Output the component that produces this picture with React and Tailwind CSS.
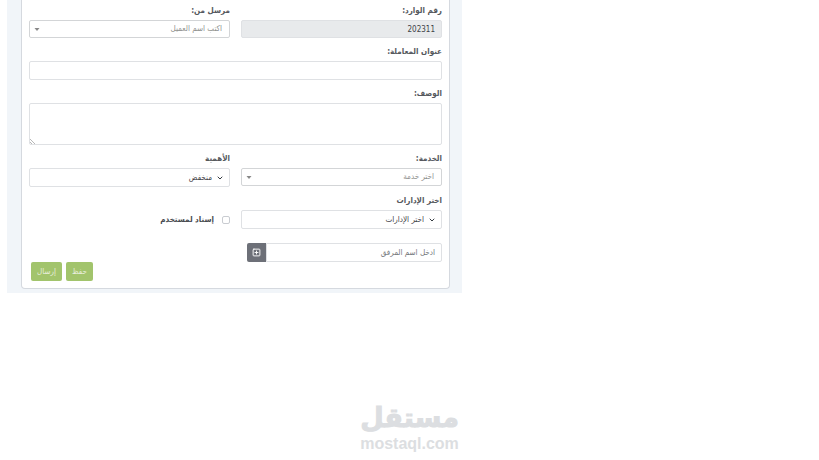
import { ChevronDown, SquarePlus } from "lucide-react";
import clsx from "clsx";

const field =
  "block w-full rounded-[2px] border border-[#dfe1e4] bg-white px-[6px] text-[8px] leading-[12px] text-[#3f4247] placeholder:text-[#75787c] placeholder:opacity-100 outline-none focus:border-[#a2c46c]";

function Label({ htmlFor, children }) {
  return (
    <label htmlFor={htmlFor} className="flex h-[17px] items-center pb-[2px] text-[8px] font-bold text-[#55585d]">
      {children}
    </label>
  );
}

function SearchSelect({ id, placeholder }) {
  return (
    <div className="relative">
      <select
        id={id}
        className={clsx(field, "h-[18px] appearance-none border-[#d3d5d7]! pr-[7px] pl-4 text-[#8f918e]!")}
      >
        <option>{placeholder}</option>
      </select>
      <svg viewBox="0 0 6 3" className="pointer-events-none absolute top-2 left-[5px] h-[3px] w-[6px] fill-[#888]" aria-hidden="true">
        <path d="M0.5 0h5L3 3z" />
      </svg>
    </div>
  );
}

function FormSelect({ id, value }) {
  return (
    <div className="relative">
      <select id={id} className={clsx(field, "h-[19px] appearance-none pr-[17px]")}>
        <option>{value}</option>
      </select>
      <ChevronDown
        className="pointer-events-none absolute top-[6px] right-[6px] size-2 text-[#343a40]"
        strokeWidth={3}
        aria-hidden="true"
      />
    </div>
  );
}

function ActionButton({ children }) {
  return (
    <button type="button" className="h-[19px] rounded-[2px] bg-[#a2c46c] px-[6px] text-[8px] text-[#e8eedc]">
      {children}
    </button>
  );
}

export default function App() {
  return (
    <div className="flex min-h-screen flex-col justify-between bg-white font-['DejaVu_Sans_Condensed','DejaVu_Sans',sans-serif]">
      <main dir="rtl" lang="ar" className="mr-auto ml-[7px] w-5/9 self-start bg-[#f1f5f9] pr-3 pb-1 pl-[14px]">
        <form className="rounded-b-[4px] border border-t-0 border-[#d5d9df] bg-white px-[7px] pt-[3px] pb-[7px]">
          <div className="grid grid-cols-2 gap-x-[11px] gap-y-[6px]">
            <div>
              <Label htmlFor="number">رقم الوارد:</Label>
              <input id="number" readOnly defaultValue="202311" className={clsx(field, "h-[18px] bg-[#e8eaec]!")} />
            </div>
            <div>
              <Label htmlFor="sender">مرسل من:</Label>
              <SearchSelect id="sender" placeholder="اكتب اسم العميل" />
            </div>
            <div className="col-span-2">
              <Label htmlFor="title">عنوان المعاملة:</Label>
              <input id="title" className={clsx(field, "h-[19px]")} />
            </div>
            <div className="col-span-2">
              <Label htmlFor="description">الوصف:</Label>
              <div className="relative">
                <textarea id="description" className={clsx(field, "h-[42px] resize-none")} />
                <svg viewBox="0 0 5 5" className="pointer-events-none absolute bottom-px left-px size-[5px] stroke-[#999]" strokeWidth="0.7" aria-hidden="true">
                  <path d="M0 0l5 5M0 3l2 2" />
                </svg>
              </div>
            </div>
            <div>
              <Label htmlFor="service">الخدمة:</Label>
              <SearchSelect id="service" placeholder="اختر خدمة" />
            </div>
            <div>
              <Label htmlFor="priority">الأهمية</Label>
              <FormSelect id="priority" value="منخفض" />
            </div>
            <div>
              <Label htmlFor="departments">اختر الإدارات</Label>
              <FormSelect id="departments" value="اختر الإدارات" />
            </div>
            <div className="flex h-[19px] items-center gap-2 self-end">
              <input
                id="assign"
                type="checkbox"
                className="size-2 appearance-none rounded-[2px] border border-[#c9ccd1] bg-white checked:bg-[#a2c46c]"
              />
              <label htmlFor="assign" className="text-[8px] font-bold text-[#484b50]">
                إسناد لمستخدم
              </label>
            </div>
          </div>

          <div className="mt-[14px] grid grid-cols-2 gap-x-[11px]">
            <div className="flex pl-[6px]">
              <input
                aria-label="ادخل اسم المرفق"
                placeholder="ادخل اسم المرفق"
                className={clsx(field, "h-[19px] min-w-0 flex-1 rounded-l-none")}
              />
              <button
                type="button"
                aria-label="إضافة مرفق"
                className="flex h-[19px] w-[19px] items-center justify-center rounded-l-[2px] bg-[#6d7078] text-white"
              >
                <SquarePlus className="size-[9px]" strokeWidth={2.5} />
              </button>
            </div>
          </div>

          <div className="flex justify-end gap-1 pl-[2px]">
            <ActionButton>حفظ</ActionButton>
            <ActionButton>إرسال</ActionButton>
          </div>
        </form>
      </main>

      <footer className="flex flex-col items-center pb-[7px] text-[#dcdee1]">
        <span lang="ar" dir="rtl" className="font-['DejaVu_Sans'] text-[27px] leading-[34px] font-bold [-webkit-text-stroke:1px_#dcdee1]">
          مستقل
        </span>
        <span className="font-['Liberation_Sans'] text-[16px] leading-[18px] font-bold">mostaql.com</span>
      </footer>
    </div>
  );
}
